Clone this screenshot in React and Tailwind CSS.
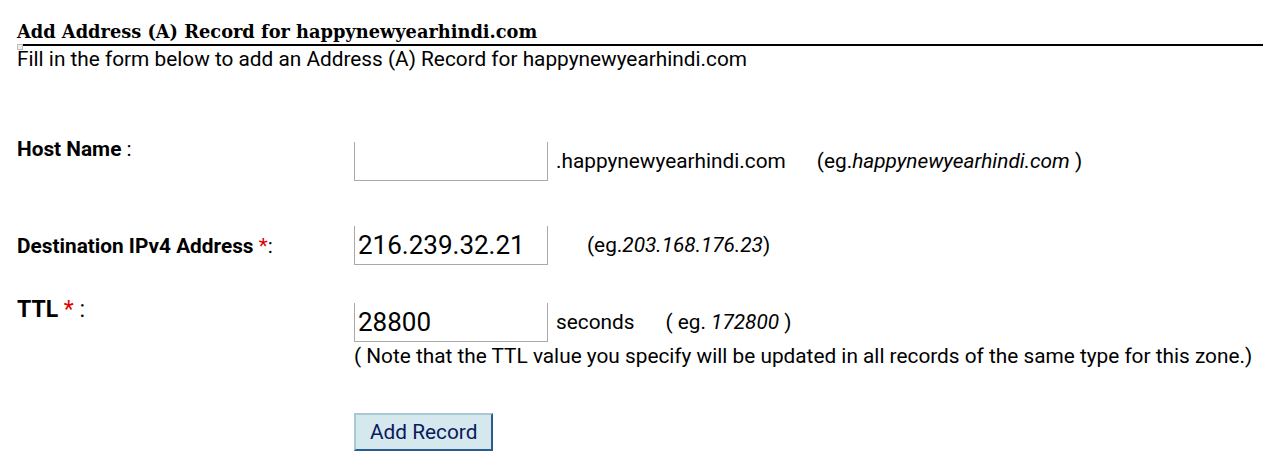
import React from 'react'

const fieldInput = 'w-[194px] h-[39px] bg-white border-x border-b border-t-0 border-[#a9a9a9] px-[3px] text-[26px] leading-none text-black outline-none font-["Roboto",sans-serif]'

export default function App() {
  return (
    <div className="w-[1263px] h-[455px] overflow-hidden bg-white text-black font-['Roboto',sans-serif]">
      <div className="pl-[17px] pt-[20px]">
        {/* ── Titre ─────────────────────────── */}
        <div className="relative">
          <h2 className="font-['DejaVu_Serif',serif] font-bold text-[17.8px] leading-[24px] border-b-2 border-black">
            Add Address (A) Record for happynewyearhindi.com
          </h2>
          <span className="absolute left-0 top-[24px] w-[6px] h-[6px] border border-[#bbb] bg-[#eee]" />
        </div>
        <p className="mt-[1px] text-[20.8px] leading-[24px]">
          Fill in the form below to add an Address (A) Record for happynewyearhindi.com
        </p>

        {/* ── Formulaire ────────────────────── */}
        <div className="mt-[66px]">
          {/* Host name */}
          <div className="flex items-start">
            <div className="w-[337px] text-[20.8px] leading-[24px]">
              <span className="font-bold">Host Name</span> :
            </div>
            <div className="flex items-center mt-[5px]">
              <input className={fieldInput} defaultValue="" />
              <span className="ml-[8px] text-[20.8px]">.happynewyearhindi.com</span>
              <span className="ml-[31px] text-[20.8px]">
                (eg.<i>happynewyearhindi.com</i> )
              </span>
            </div>
          </div>

          {/* Destination */}
          <div className="flex items-center mt-[45px]">
            <div className="w-[337px] text-[20.8px] leading-[24px]">
              <span className="font-bold">Destination IPv4 Address</span>{' '}
              <span className="text-[#e00000]">*</span>:
            </div>
            <input className={fieldInput} defaultValue="216.239.32.21" />
            <span className="ml-[39px] text-[20.8px]">
              (eg.<i>203.168.176.23</i>)
            </span>
          </div>

          {/* TTL */}
          <div className="flex items-start mt-[31px]">
            <div className="w-[337px] text-[23px] leading-[28px]">
              <span className="font-bold">TTL</span>{' '}
              <span className="text-[#e00000]">*</span> :
            </div>
            <div className="mt-[7px]">
              <div className="flex items-center">
                <input className={fieldInput} defaultValue="28800" />
                <span className="ml-[8px] text-[20.8px]">seconds</span>
                <span className="ml-[31px] text-[20.8px]">
                  ( eg. <i>172800</i> )
                </span>
              </div>
              <p className="mt-[1px] text-[20.8px] leading-[26px]">
                ( Note that the TTL value you specify will be updated in all records of the same type for this zone.)
              </p>
              <button className="mt-[44px] h-[38px] px-[14px] bg-[#d4e8ee] border-2 border-t-[#a8c8d8] border-l-[#a8c8d8] border-r-[#2c5c8c] border-b-[#2c5c8c] text-[20.8px] leading-none text-[#0b1a5c]">
                Add Record
              </button>
            </div>
          </div>
        </div>
      </div>
    </div>
  )
}
